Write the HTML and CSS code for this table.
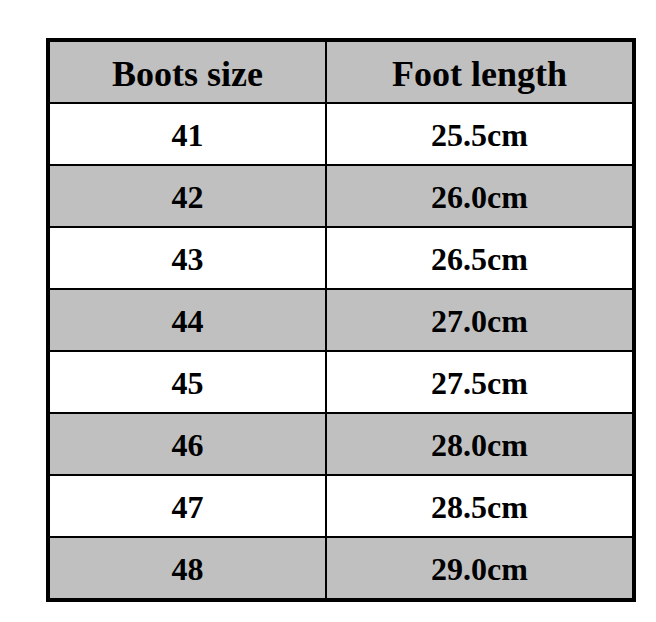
FILE: index.html
```html
<!DOCTYPE html>
<html lang="en">
<head>
<meta charset="utf-8">
<title>Boots size chart</title>
<link rel="stylesheet" href="styles.css">
</head>
<body>
<table class="size-table">
  <colgroup>
    <col class="col-size">
    <col class="col-length">
  </colgroup>
  <thead>
    <tr class="row-gray">
      <th class="cell-first">Boots size</th>
      <th>Foot length</th>
    </tr>
  </thead>
  <tbody>
    <tr class="row-white"><td class="cell-first">41</td><td>25.5cm</td></tr>
    <tr class="row-gray"><td class="cell-first">42</td><td>26.0cm</td></tr>
    <tr class="row-white"><td class="cell-first">43</td><td>26.5cm</td></tr>
    <tr class="row-gray"><td class="cell-first">44</td><td>27.0cm</td></tr>
    <tr class="row-white"><td class="cell-first">45</td><td>27.5cm</td></tr>
    <tr class="row-gray"><td class="cell-first">46</td><td>28.0cm</td></tr>
    <tr class="row-white"><td class="cell-first">47</td><td>28.5cm</td></tr>
    <tr class="row-gray row-last"><td class="cell-first">48</td><td>29.0cm</td></tr>
  </tbody>
</table>
</body>
</html>
```

FILE: styles.css
```css
html, body {
  margin: 0;
  padding: 0;
  background: #ffffff;
}

body {
  padding: 38px 0 0 46px;
  font-family: "Liberation Serif", "Times New Roman", serif;
  color: #000000;
}

.size-table {
  width: 590px;
  table-layout: fixed;
  border-collapse: separate;
  border-spacing: 0;
  border: 4px solid #000000;
}

.col-size {
  width: 277px;
}

.col-length {
  width: 305px;
}

.size-table th,
.size-table td {
  box-sizing: border-box;
  height: 62px;
  padding: 3px 0 0 0;
  text-align: center;
  vertical-align: middle;
  font-weight: bold;
  border-bottom: 2px solid #000000;
}

.size-table th {
  font-size: 36px;
}

.size-table td {
  font-size: 32px;
}

.size-table .row-last td {
  border-bottom: none;
  height: 60px;
}

.size-table .cell-first {
  border-right: 2px solid #000000;
}

.row-gray {
  background: #c0c0c0;
}

.row-white {
  background: #ffffff;
}
```
